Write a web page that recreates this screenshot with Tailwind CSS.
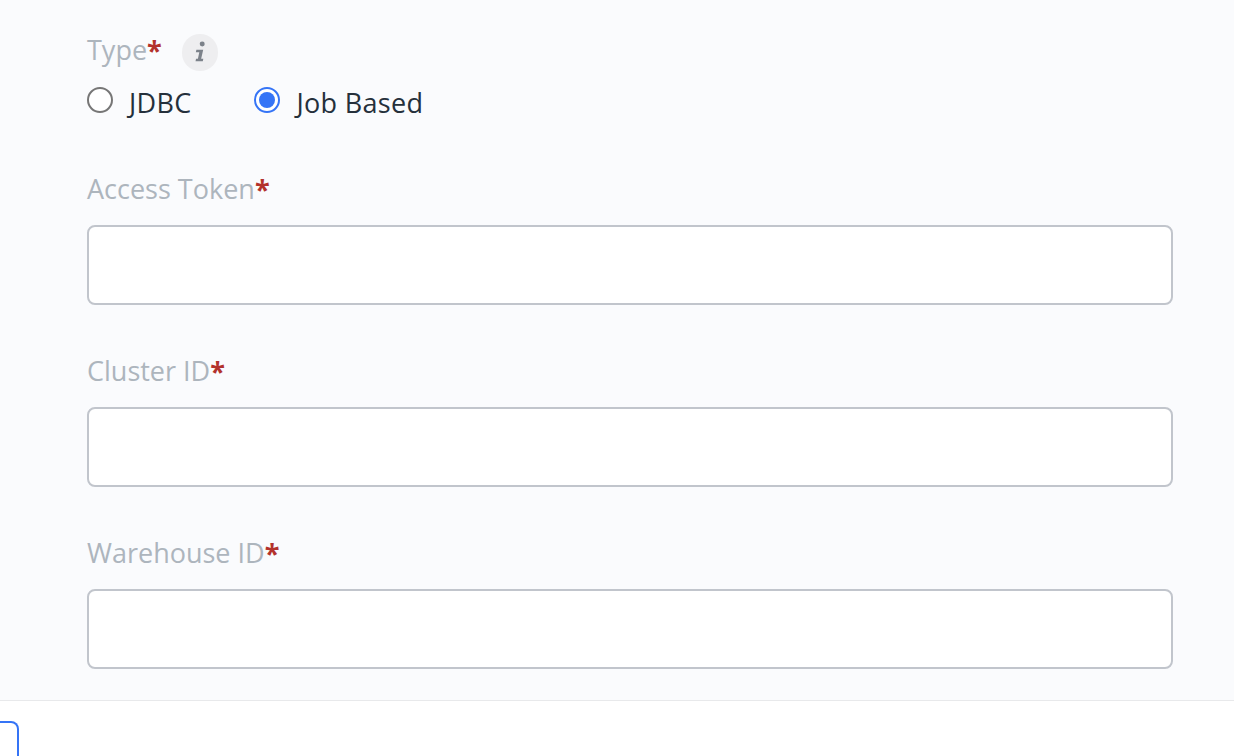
<!DOCTYPE html>
<html lang="en">
<head>
    <meta charset="UTF-8">
    <title>Connection</title>
    <script src="https://cdn.jsdelivr.net/npm/@tailwindcss/browser@4"></script>
</head>
<body class="bg-white font-['Open_Sans','Noto_Sans',sans-serif] overflow-hidden">
    <div class="h-[756px] flex flex-col">
        <div class="h-[701px] shrink-0 bg-[#fafbfd] border-b border-[#e8e9eb] pl-[87px] pr-[61px] pt-[32px]">
            <div class="flex items-center h-[40px]">
                <span class="text-[27px] leading-[36px] text-[#adb5bd] -mt-[5px]">Type<span class="text-[#b3322c] font-bold">*</span></span>
                <span class="ml-[20px] mt-[1px] w-[36px] h-[37px] rounded-full bg-[#eeeef0] flex items-center justify-center">
                    <svg width="13" height="22" viewBox="0 0 12 20" fill="#7c828a" class="ml-[1px] -mt-[2px]"><circle cx="7.6" cy="2.6" r="2.3"/><path d="M2.2 8h6.3l-1.9 8.2h2l-.5 2.3H1.4l.5-2.3h1.7l1.3-5.9H1.7z"/></svg>
                </span>
            </div>
            <div class="flex items-center h-[36px] mt-[13px] text-[27px] tracking-[0.3px] text-[#25303b]">
                <label class="flex items-center">
                    <span class="w-[26px] h-[26px] rounded-full border-2 border-[#767676] bg-white -mt-[7px]"></span>
                    <span class="ml-[16px]">JDBC</span>
                </label>
                <label class="flex items-center ml-[62px]">
                    <span class="w-[26px] h-[26px] rounded-full border-2 border-[#3574f6] bg-white -mt-[7px] flex items-center justify-center">
                        <span class="w-[16px] h-[16px] rounded-full bg-[#3574f6]"></span>
                    </span>
                    <span class="ml-[17px]">Job Based</span>
                </label>
            </div>
            <div class="mt-[50px] flex flex-col gap-[48px]">
                <div>
                    <div class="text-[27px] leading-[36px] text-[#adb5bd]">Access Token<span class="text-[#b3322c] font-bold">*</span></div>
                    <input type="text" class="mt-[18px] block w-full h-[80px] bg-white border-2 border-[#c1c5cc] rounded-[8px]">
                </div>
                <div>
                    <div class="text-[27px] leading-[36px] text-[#adb5bd]">Cluster ID<span class="text-[#b3322c] font-bold">*</span></div>
                    <input type="text" class="mt-[18px] block w-full h-[80px] bg-white border-2 border-[#c1c5cc] rounded-[8px]">
                </div>
                <div>
                    <div class="text-[27px] leading-[36px] text-[#adb5bd]">Warehouse ID<span class="text-[#b3322c] font-bold">*</span></div>
                    <input type="text" class="mt-[18px] block w-full h-[80px] bg-white border-2 border-[#c1c5cc] rounded-[8px]">
                </div>
            </div>
        </div>
        <div class="flex-1 pt-[20px]">
            <button class="block w-[19px] h-[60px] border-2 border-l-0 border-[#3574f6] rounded-r-[8px] bg-white"></button>
        </div>
    </div>
</body>
</html>
